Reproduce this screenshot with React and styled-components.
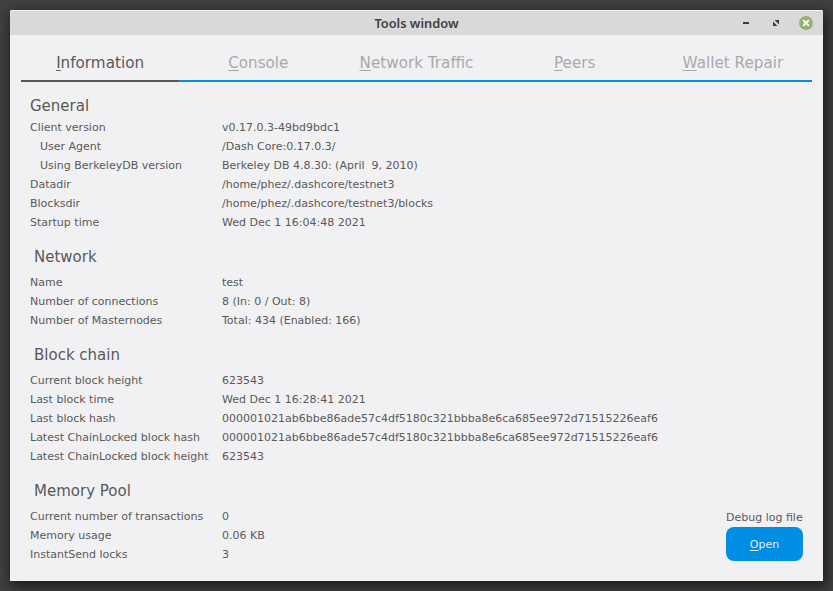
import React from "react";
import styled, { createGlobalStyle } from "styled-components";

const GlobalStyle = createGlobalStyle`
  * { box-sizing: border-box; }
  body {
    margin: 0;
    background: #3c3c3c;
    font-family: "DejaVu Sans", sans-serif;
    font-size: 11px;
    color: #595959;
    overflow: hidden;
  }
`;

const Desktop = styled.div`
  width: 833px;
  height: 591px;
  padding: 10px;
  background: #414141;
`;

const Window = styled.main`
  display: flex;
  flex-direction: column;
  height: 571px;
  background: #f1f1f3;
  border-radius: 2px 2px 0 0;
  box-shadow: 2px 4px 14px 2px rgba(0, 0, 0, 0.6);
`;

const TitleBar = styled.header`
  display: grid;
  grid-template-columns: 1fr auto 1fr;
  align-items: center;
  height: 25px;
  flex: none;
  background: #d9d9d9;
  border-top: 1px solid #f6f6f6;
  border-radius: 2px 2px 0 0;
`;

const Title = styled.h1`
  grid-column: 2;
  margin: 0;
  font: 600 12.8px/20px "Noto Sans", sans-serif;
  color: #404046;
`;

const Controls = styled.div`
  display: flex;
  justify-content: flex-end;
  gap: 16px;
  padding-right: 10px;
`;

const ControlButton = styled.button`
  display: flex;
  width: 14px;
  height: 14px;
  padding: 0;
  border: 0;
  background: none;
`;

const Tabs = styled.nav`
  display: grid;
  grid-template-columns: repeat(5, 1fr);
  flex: none;
  height: 47px;
  margin: 0 11px;
`;

const Tab = styled.a`
  padding-top: 18px;
  border-bottom: 2px solid ${(p) => (p.$active ? "#555555" : "#008de4")};
  color: ${(p) => (p.$active ? "#595959" : "#a9a9a9")};
  font-size: 15.2px;
  line-height: 20px;
  text-align: center;
`;

const Mnemonic = styled.span`
  text-decoration: underline;
  text-decoration-thickness: 1px;
  text-underline-offset: 2px;
  text-decoration-skip-ink: none;
`;

const Content = styled.div`
  display: flex;
  flex: 1;
  justify-content: space-between;
  padding: 12px 20px 17px;
`;

const Heading = styled.h2`
  margin: 0;
  height: ${(p) => (p.$first ? "24px" : "41px")};
  padding: ${(p) => (p.$first ? "2px 0 0" : "15px 0 0 4px")};
  font-size: 15px;
  font-weight: normal;
  line-height: 20px;
`;

const Row = styled.div`
  display: grid;
  grid-template-columns: 192px auto;
  line-height: 19px;
  white-space: pre;
`;

const Label = styled.span`
  padding-left: ${(p) => (p.$indent ? "10px" : "0")};
`;

const DebugLog = styled.aside`
  display: flex;
  flex-direction: column;
  justify-content: flex-end;
  width: 77px;
  line-height: 19px;
  padding-bottom: 3px;
  white-space: nowrap;
`;

const OpenButton = styled.button`
  height: 34px;
  padding: 0;
  border: 0;
  border-radius: 8px;
  background: #008de4;
  color: #e0f0fb;
  font: 11px "DejaVu Sans", sans-serif;
`;

const tabs = ["Information", "Console", "Network Traffic", "Peers", "Wallet Repair"];

const hash = "000001021ab6bbe86ade57c4df5180c321bbba8e6ca685ee972d71515226eaf6";

const sections = [
  {
    title: "General",
    rows: [
      ["Client version", "v0.17.0.3-49bd9bdc1"],
      ["User Agent", "/Dash Core:0.17.0.3/", true],
      ["Using BerkeleyDB version", "Berkeley DB 4.8.30: (April  9, 2010)", true],
      ["Datadir", "/home/phez/.dashcore/testnet3"],
      ["Blocksdir", "/home/phez/.dashcore/testnet3/blocks"],
      ["Startup time", "Wed Dec 1 16:04:48 2021"],
    ],
  },
  {
    title: "Network",
    rows: [
      ["Name", "test"],
      ["Number of connections", "8 (In: 0 / Out: 8)"],
      ["Number of Masternodes", "Total: 434 (Enabled: 166)"],
    ],
  },
  {
    title: "Block chain",
    rows: [
      ["Current block height", "623543"],
      ["Last block time", "Wed Dec 1 16:28:41 2021"],
      ["Last block hash", hash],
      ["Latest ChainLocked block hash", hash],
      ["Latest ChainLocked block height", "623543"],
    ],
  },
  {
    title: "Memory Pool",
    rows: [
      ["Current number of transactions", "0"],
      ["Memory usage", "0.06 KB"],
      ["InstantSend locks", "3"],
    ],
  },
];

function Accelerated({ text }) {
  return (
    <>
      <Mnemonic>{text[0]}</Mnemonic>
      {text.slice(1)}
    </>
  );
}

export default function App() {
  return (
    <>
      <GlobalStyle />
      <Desktop>
        <Window>
          <TitleBar>
            <Title>Tools window</Title>
            <Controls>
              <ControlButton aria-label="Minimize">
                <svg width="14" height="14" viewBox="0 0 14 14">
                  <rect x="4" y="6" width="6" height="2" fill="#3b3b3b" />
                </svg>
              </ControlButton>
              <ControlButton aria-label="Maximize">
                <svg width="14" height="14" viewBox="0 0 14 14" fill="#3b3b3b">
                  <path d="M5.6 4H10v4.4zM4 5.6V10h4.4z" />
                </svg>
              </ControlButton>
              <ControlButton aria-label="Close">
                <svg width="14" height="14" viewBox="0 0 14 14">
                  <circle cx="7" cy="7" r="7" fill="#92b372" />
                  <path d="M4.2 4.2l5.6 5.6M9.8 4.2l-5.6 5.6" stroke="#fff" strokeWidth="1.9" />
                </svg>
              </ControlButton>
            </Controls>
          </TitleBar>
          <Tabs>
            {tabs.map((name, i) => (
              <Tab key={name} $active={i === 0}>
                <Accelerated text={name} />
              </Tab>
            ))}
          </Tabs>
          <Content>
            <div>
              {sections.map(({ title, rows }, i) => (
                <section key={title}>
                  <Heading $first={i === 0}>{title}</Heading>
                  {rows.map(([label, value, indent]) => (
                    <Row key={label}>
                      <Label $indent={indent}>{label}</Label>
                      <span>{value}</span>
                    </Row>
                  ))}
                </section>
              ))}
            </div>
            <DebugLog>
              <span>Debug log file</span>
              <OpenButton>
                <Accelerated text="Open" />
              </OpenButton>
            </DebugLog>
          </Content>
        </Window>
      </Desktop>
    </>
  );
}
